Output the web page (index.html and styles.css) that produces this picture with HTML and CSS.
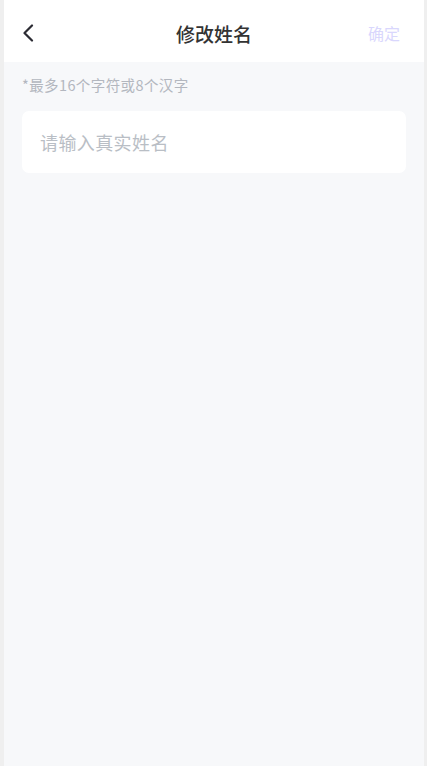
FILE: index.html
```html
<!DOCTYPE html>
<html lang="zh">
<head>
<meta charset="utf-8">
<link rel="stylesheet" href="styles.css">
</head>
<body>
<div class="page">
  <header class="nav">
    <span class="back">
      <svg width="12" height="18" viewBox="0 0 12 18"><path d="M10 1.5 L2.5 9 L10 16.5" fill="none" stroke="#2b2b33" stroke-width="2.2" stroke-linecap="round" stroke-linejoin="round"/></svg>
    </span>
    <h1 class="title">修改姓名</h1>
    <span class="ok">确定</span>
  </header>
  <main class="content">
    <p class="hint">*最多16个字符或8个汉字</p>
    <div class="card">
      <input class="field" type="text" placeholder="请输入真实姓名">
    </div>
  </main>
</div>
</body>
</html>
```

FILE: styles.css
```css
html, body {
  margin: 0;
  padding: 0;
  height: 100%;
  background: #efefef;
}
body {
  font-family: "Noto Sans CJK SC", "Noto Sans", sans-serif;
}
.page {
  margin-left: 4px;
  width: 420px;
  height: 766px;
  background: #f7f8fa;
  display: flex;
  flex-direction: column;
}
.nav {
  height: 62px;
  background: #fff;
  display: flex;
  align-items: center;
  justify-content: space-between;
  padding: 0 24px 0 18px;
  position: relative;
}
.back {
  display: flex;
  align-items: center;
  width: 14px;
  height: 20px;
  margin-top: 4px;
}
.title {
  position: absolute;
  left: 0;
  right: 0;
  text-align: center;
  margin: 0;
  font-size: 19px;
  font-weight: 500;
  color: #333333;
  margin-top: 4px;
  pointer-events: none;
}
.ok {
  font-size: 16px;
  color: #d9d7fd;
  margin-top: 4px;
}
.content {
  padding: 0 18px;
}
.hint {
  margin: 13px 0 0;
  font-size: 14.5px;
  line-height: 20px;
  color: #b3b7bf;
  letter-spacing: 0.4px;
}
.card {
  margin-top: 16px;
  height: 62px;
  background: #fff;
  border-radius: 7px;
  display: flex;
  align-items: center;
  padding: 0 18px;
}
.field {
  border: none;
  outline: none;
  background: transparent;
  width: 100%;
  font-family: "Noto Sans CJK SC", "Noto Sans", sans-serif;
  font-size: 18px;
  letter-spacing: 0.4px;
  color: #333;
  padding: 0;
}
.field::placeholder {
  color: #b9bec5;
}
```
